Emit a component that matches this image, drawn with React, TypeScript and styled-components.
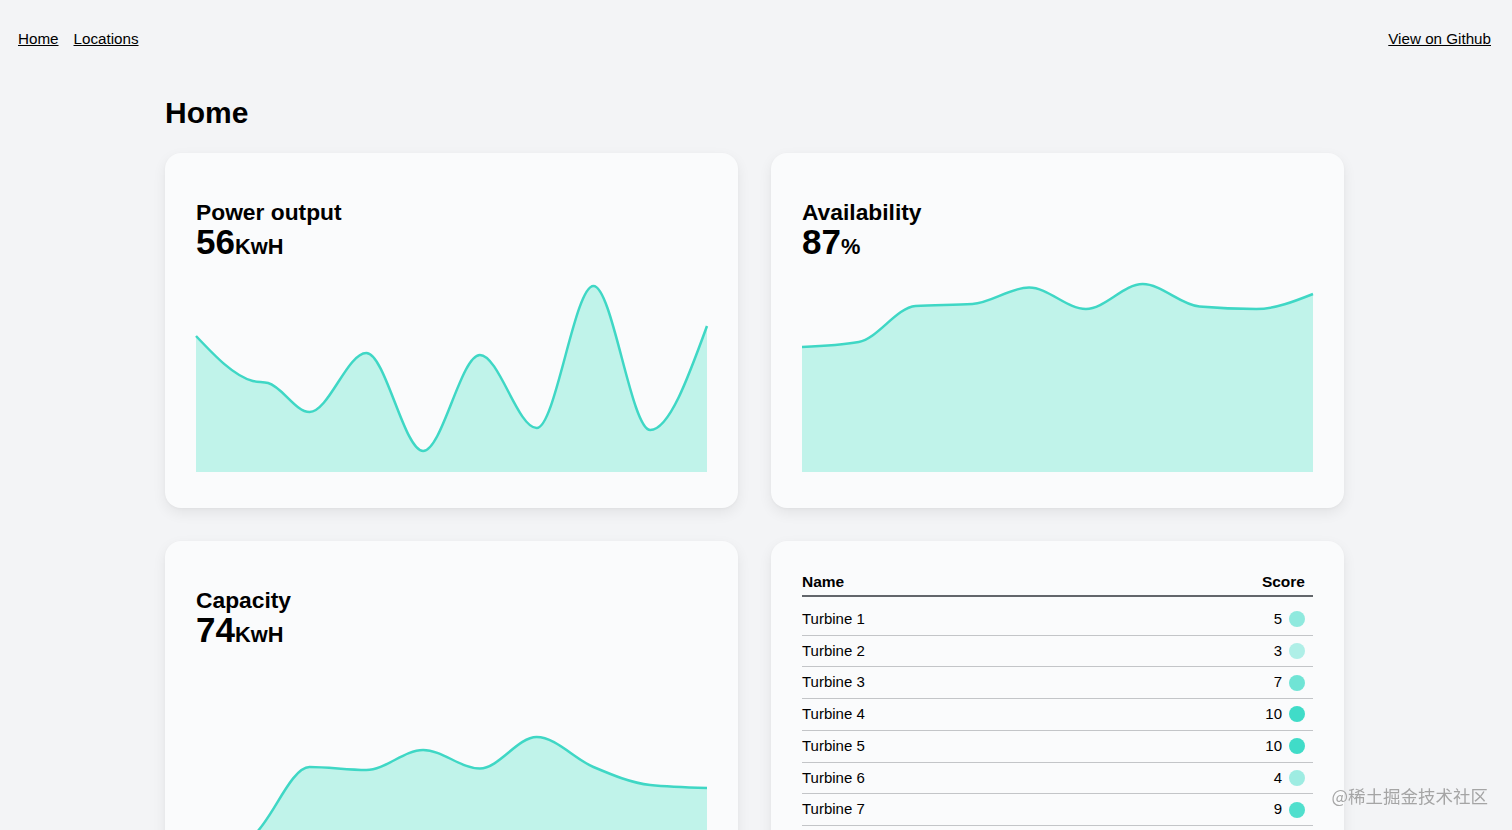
import styled, { createGlobalStyle } from 'styled-components';

const CHART_W = 511;
const CHART_H = 188;
const STEP = CHART_W / 9;

type Point = [number, number];

// index along x, value measured up from the bottom of the chart in px
const powerData: Point[] = [
  [0, 136], [1, 91], [1.27, 89], [2, 60], [3, 119], [4, 21],
  [5, 117], [6, 44], [7, 186], [8, 42], [9, 146],
];
const availabilityData: Point[] = [
  [0, 125], [1, 130], [2, 166], [3, 168], [4, 184.5],
  [5, 163], [6, 188], [7, 165.5], [8, 163], [9, 178],
];
const capacityData: Point[] = [
  [0, 2], [1, 24], [2, 93], [3, 90], [4, 110],
  [5, 91.5], [6, 123], [7, 93], [8, 75], [9, 72],
];

const turbines = [
  { name: 'Turbine 1', score: 5 },
  { name: 'Turbine 2', score: 3 },
  { name: 'Turbine 3', score: 7 },
  { name: 'Turbine 4', score: 10 },
  { name: 'Turbine 5', score: 10 },
  { name: 'Turbine 6', score: 4 },
  { name: 'Turbine 7', score: 9 },
];

// same maths as d3's curveMonotoneX
function monotonePath(pts: Point[]): string {
  const n = pts.length;
  const slope = (i: number) => (pts[i + 1][1] - pts[i][1]) / (pts[i + 1][0] - pts[i][0]);
  const t: number[] = new Array(n).fill(0);
  for (let i = 1; i < n - 1; i++) {
    const h0 = pts[i][0] - pts[i - 1][0];
    const h1 = pts[i + 1][0] - pts[i][0];
    const s0 = slope(i - 1);
    const s1 = slope(i);
    const p = (s0 * h1 + s1 * h0) / (h0 + h1);
    t[i] = (Math.sign(s0) + Math.sign(s1)) * Math.min(Math.abs(s0), Math.abs(s1), 0.5 * Math.abs(p)) || 0;
  }
  t[0] = (3 * slope(0) - t[1]) / 2;
  t[n - 1] = (3 * slope(n - 2) - t[n - 2]) / 2;

  let d = `M${pts[0][0]},${pts[0][1]}`;
  for (let i = 0; i < n - 1; i++) {
    const [x0, y0] = pts[i];
    const [x1, y1] = pts[i + 1];
    const dx = (x1 - x0) / 3;
    d += `C${x0 + dx},${y0 + dx * t[i]},${x1 - dx},${y1 - dx * t[i + 1]},${x1},${y1}`;
  }
  return d;
}

const GlobalStyle = createGlobalStyle`
  html {
    scrollbar-width: none;
  }
  html::-webkit-scrollbar {
    display: none;
  }
  body {
    margin: 0;
    background: #f3f4f6;
    color: #000;
    font-family: "Liberation Sans", Arial, Helvetica, sans-serif;
  }
`;

const Nav = styled.nav`
  display: flex;
  justify-content: space-between;
  align-items: center;
  padding: 30px 21px 0 18px;
`;

const NavGroup = styled.div`
  display: flex;
  gap: 15px;
`;

const NavLink = styled.a`
  color: #000;
  font-size: 15.2px;
  line-height: 18px;
  text-decoration: underline;
`;

const Main = styled.main`
  width: 1179px;
  margin-left: calc(50% - 591px);
  padding: 47px 0 40px;
`;

const PageTitle = styled.h1`
  margin: 0 0 22px;
  font-size: 30px;
  line-height: 36px;
  font-weight: 700;
`;

const Grid = styled.div`
  display: grid;
  grid-template-columns: 1fr 1fr;
  gap: 33px;
`;

const Card = styled.section<{ $pad: string }>`
  box-sizing: border-box;
  height: 355px;
  padding: ${p => p.$pad};
  background: #fafbfc;
  border-radius: 16px;
  box-shadow: 0 5px 14px rgba(0, 0, 0, 0.07), 0 1px 3px rgba(0, 0, 0, 0.03);
`;

const StatTitle = styled.h2`
  margin: 0;
  font-size: 22.8px;
  line-height: 26px;
  font-weight: 700;
`;

const StatValue = styled.div`
  margin-bottom: 21px;
  font-size: 35px;
  line-height: 33px;
  font-weight: 700;
`;

const Unit = styled.span`
  font-size: 21.8px;
`;

const ChartSvg = styled.svg`
  display: block;
  overflow: visible;
`;

const Table = styled.table`
  width: 100%;
  border-collapse: collapse;
  font-size: 15px;
`;

const Th = styled.th<{ $right?: boolean }>`
  padding: 0 ${p => (p.$right ? '8px' : '0')} 4px 0;
  text-align: ${p => (p.$right ? 'right' : 'left')};
  font-size: 15.5px;
  line-height: 18px;
  font-weight: 700;
  border-bottom: 2px solid #62666b;
`;

const Td = styled.td`
  padding: 0;
  line-height: 30.7px;
  border-bottom: 1px solid #c3c5c8;

  tr:first-child > & {
    padding-top: 7px;
  }
`;

const ScoreWrap = styled.div`
  display: flex;
  justify-content: flex-end;
  align-items: center;
  gap: 7px;
  padding-right: 8px;
`;

const Dot = styled.span<{ $score: number }>`
  width: 16px;
  height: 16px;
  border-radius: 50%;
  background: rgba(64, 220, 200, ${p => Math.min(1, 0.15 + 0.085 * p.$score)});
`;

const Watermark = styled.div`
  position: fixed;
  right: 24px;
  bottom: 22px;
  font-family: "Noto Sans CJK SC", sans-serif;
  font-size: 17.5px;
  color: rgba(150, 150, 150, 0.85);
  pointer-events: none;
`;

function AreaChart({ data }: { data: Point[] }) {
  const pts: Point[] = data.map(([i, v]) => [i * STEP, CHART_H - v]);
  const line = monotonePath(pts);
  const area = `${line}L${CHART_W},${CHART_H}L0,${CHART_H}Z`;
  return (
    <ChartSvg width="100%" height={CHART_H} viewBox={`0 0 ${CHART_W} ${CHART_H}`}>
      <path d={area} fill="#c0f3ea" />
      <path d={line} fill="none" stroke="#3fd7c5" strokeWidth={2.5} />
    </ChartSvg>
  );
}

function StatCard({ title, value, unit, data }: { title: string; value: number; unit: string; data: Point[] }) {
  return (
    <Card $pad="46px 31px 36px">
      <StatTitle>{title}</StatTitle>
      <StatValue>
        {value}
        <Unit>{unit}</Unit>
      </StatValue>
      <AreaChart data={data} />
    </Card>
  );
}

export default function App() {
  return (
    <>
      <GlobalStyle />
      <Nav>
        <NavGroup>
          <NavLink href="#">Home</NavLink>
          <NavLink href="#">Locations</NavLink>
        </NavGroup>
        <NavLink href="#">View on Github</NavLink>
      </Nav>
      <Main>
        <PageTitle>Home</PageTitle>
        <Grid>
          <StatCard title="Power output" value={56} unit="KwH" data={powerData} />
          <StatCard title="Availability" value={87} unit="%" data={availabilityData} />
          <StatCard title="Capacity" value={74} unit="KwH" data={capacityData} />
          <Card $pad="32px 31px">
            <Table>
              <thead>
                <tr>
                  <Th>Name</Th>
                  <Th $right>Score</Th>
                </tr>
              </thead>
              <tbody>
                {turbines.map(t => (
                  <tr key={t.name}>
                    <Td>{t.name}</Td>
                    <Td>
                      <ScoreWrap>
                        {t.score}
                        <Dot $score={t.score} />
                      </ScoreWrap>
                    </Td>
                  </tr>
                ))}
              </tbody>
            </Table>
          </Card>
        </Grid>
      </Main>
      <Watermark>@稀土掘金技术社区</Watermark>
    </>
  );
}
